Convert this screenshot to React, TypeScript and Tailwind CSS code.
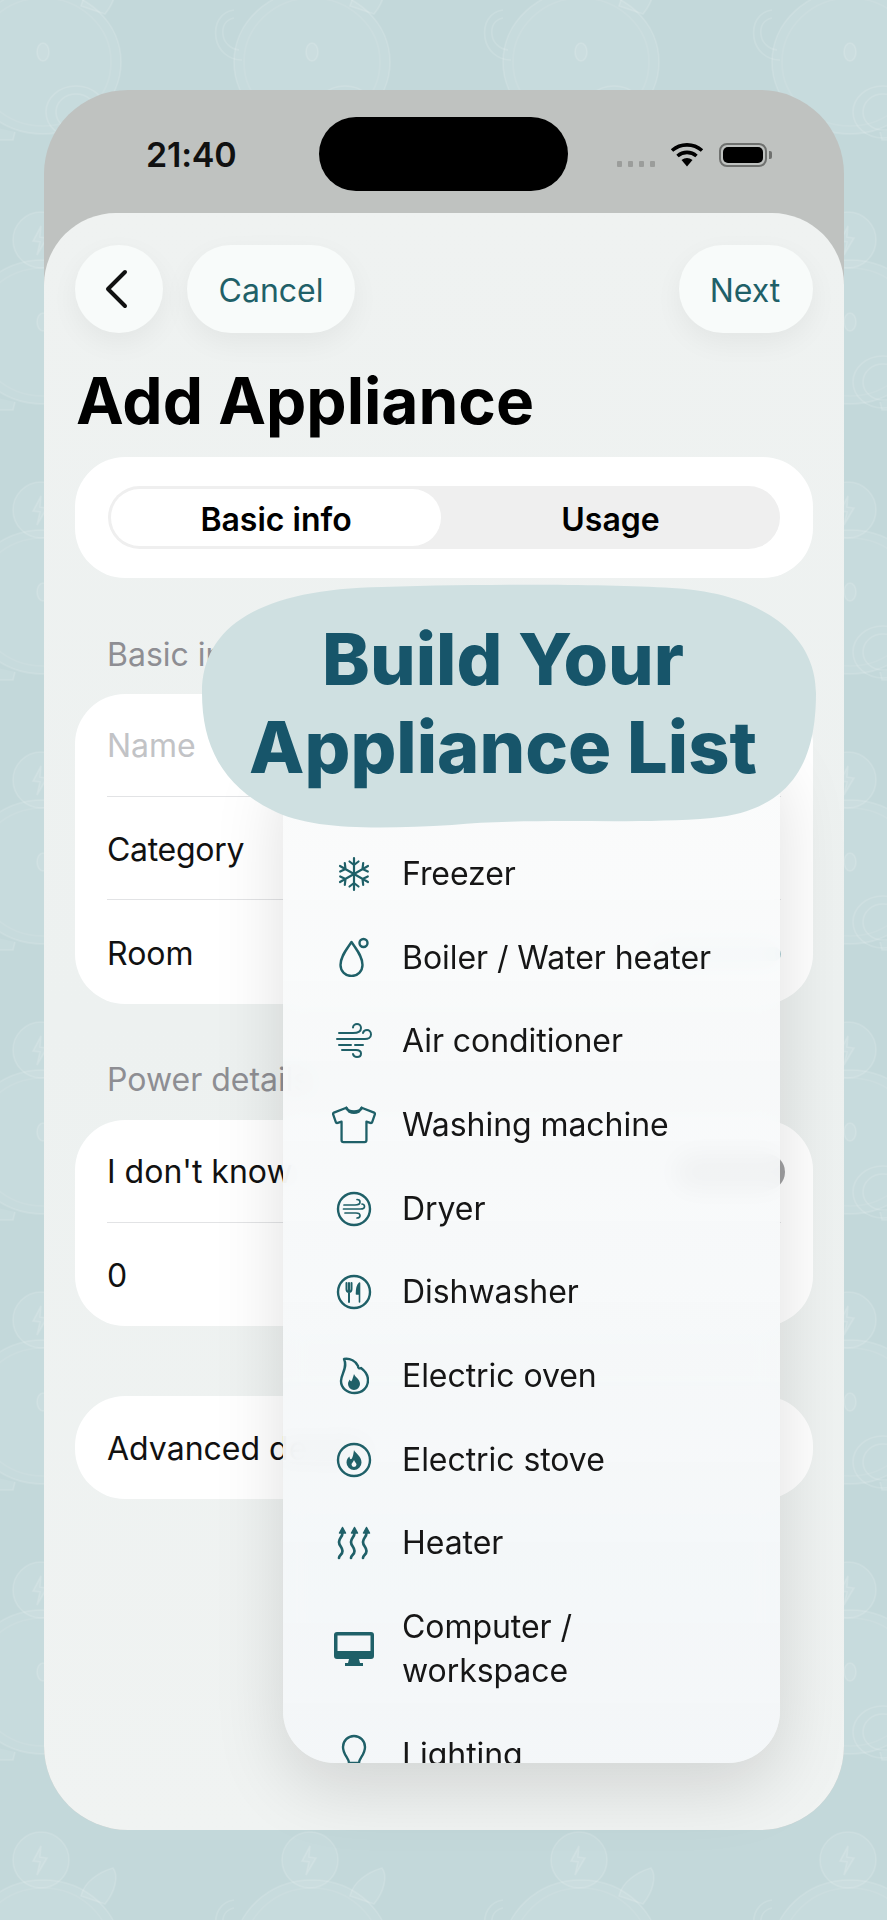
import React from "react";

const teal = "#1f6068";

function PigPattern() {
  return (
    <svg className="absolute inset-0" width="887" height="1920" aria-hidden="true">
      <defs>
        <pattern id="pig" patternUnits="userSpaceOnUse" x="-69" y="-60" width="269" height="270">
          <g fill="#ffffff" fillOpacity="0.07" stroke="#ffffff" strokeOpacity="0.12" strokeWidth="1.6">
            <circle cx="110" cy="30" r="28" />
            <path d="M110 16l-8 15 7 1-3 13 10-17-7-1z" />
            <path d="M150 66c3-14 18-24 32-28 6 8 2 24-8 36z" />
            <ellipse cx="112" cy="122" rx="78" ry="72" />
            <ellipse cx="112" cy="122" rx="68" ry="64" fillOpacity="0" strokeOpacity="0.07" />
            <path d="M58 186l-2 14h26l2-8M142 192l2 8h26l-2-14" />
            <path d="M34 70c-14 2-20 14-18 28 2 12 12 22 26 22" fillOpacity="0" />
            <path d="M34 78c-9 2-12 9-11 17 1 8 8 14 16 15" fillOpacity="0" />
            <ellipse cx="112" cy="112" rx="6" ry="9" />
            <ellipse cx="145" cy="172" rx="30" ry="26" fillOpacity="0" />
            <ellipse cx="145" cy="172" rx="20" ry="18" fillOpacity="0" />
          </g>
        </pattern>
      </defs>
      <rect width="887" height="1920" fill="url(#pig)" />
    </svg>
  );
}

const iconProps = {
  fill: "none",
  stroke: teal,
  strokeWidth: 2.4,
  strokeLinecap: "round" as const,
  strokeLinejoin: "round" as const,
};

function Freezer() {
  return (
    <svg width="36" height="36" viewBox="0 0 36 36" {...iconProps} strokeWidth={2.2}>
      <path d="M18 2v32M13.5 5.5L18 9l4.5-3.5M13.5 30.5L18 27l4.5 3.5" />
      <path d="M4 10l28 16M4.2 15.5L9.5 13 8.8 7.2M31.8 20.5L26.5 23l.7 5.8" />
      <path d="M4 26l28-16M4.2 20.5L9.5 23l-.7 5.8M31.8 15.5L26.5 13l.7-5.8" />
    </svg>
  );
}
function Boiler() {
  return (
    <svg className="-mt-[2px]" width="36" height="40" viewBox="0 0 36 40" {...iconProps}>
      <path d="M15.5 5c4.500 7 11 14 11 23a11 11 0 0 1-22 0c0-9 6.500-16 11-23z" />
      <circle cx="27.500" cy="6" r="4" />
    </svg>
  );
}
function WindLines() {
  return (
    <g>
      <path d="M3 10h14c5 0 8-1.500 8-5 0-2.500-2-4-4-4s-4 1.500-4 3.500" />
      <path d="M1 16h28c3 0 6-1.500 6-4.500s-2-4.500-4-4.500-3.500 1-4 3" />
      <path d="M3 22h12M19 22h8M6 27h14c3 0 5 1 5 3.500S23 34 21 34s-3.500-1-4-3" />
    </g>
  );
}
function Air() {
  return (
    <svg width="36" height="36" viewBox="0 0 36 36" {...iconProps} strokeWidth={2}>
      <WindLines />
    </svg>
  );
}
function Shirt() {
  return (
    <svg width="46" height="40" viewBox="0 0 46 40" {...iconProps}>
      <path d="M15 2c2 5 14 5 16 0l13 5c1 .500 1 1 .800 2l-2.800 8c-.300 1-1 1-2 .800L36 16.500V36a2 2 0 0 1-2 2H12a2 2 0 0 1-2-2V16.500L6 17.800c-1 .200-1.700.200-2-.800L1.200 9c-.200-1-.200-1.500.800-2z" />
      <path d="M15 2c1 2 2 3 3 4 3 1.500 7 1.500 10 0 1-1 2-2 3-4" />
    </svg>
  );
}
function Dryer() {
  return (
    <svg width="36" height="36" viewBox="0 0 36 36" {...iconProps}>
      <circle cx="18" cy="18" r="16" />
      <g strokeWidth={1.700}>
        <path d="M8 14h11c3 0 5-1 5-3s-1.500-2.500-3-2.500M7.500 18h17c2.500 0 4-1 4-2.500S27 13 26 13M9 22h11c2.500 0 4 1 4 2.500S22.500 27 21 27" />
      </g>
    </svg>
  );
}
function Dish() {
  return (
    <svg width="36" height="36" viewBox="0 0 36 36" {...iconProps}>
      <circle cx="18" cy="18" r="16" />
      <path d="M10.500 9v6c0 2 1 3 2.500 3s2.500-1 2.500-3V9M13 9v19" strokeWidth={2} />
      <path d="M23.500 28V9c-2.500 2-3 7-3 11h3z" fill={teal} strokeWidth={1.600} />
    </svg>
  );
}
function Oven() {
  return (
    <svg width="30" height="38" viewBox="0 0 30 38" {...iconProps}>
      <path d="M5 2C11 1 17 4 19 9C19 11 20 12 22 11C26 14 29 18 29 23C29 31 23 36 15.500 36C8 36 2 31 2 24C2 17 9 11 5 2Z" />
      <path d="M15 17c1 3 6 5 6 10a6 6 0 0 1-12 0c0-2 1-3.500 2-4.500 0 1.500 1 2 1.500 1.500 1-1.500 1.500-4 2.500-7z" fill={teal} stroke="none" />
    </svg>
  );
}
function Stove() {
  return (
    <svg width="36" height="36" viewBox="0 0 36 36" {...iconProps}>
      <circle cx="18" cy="18" r="16" />
      <path fillRule="evenodd" d="M18 8c1 3 7.500 6 7.500 12.500a7.500 7.500 0 0 1-15 0c0-3 1.500-5 3-6 0 2 1 3 2 2.500C17 15 17.500 11 18 8zm0 10c-.500 2-2.500 3-2.500 4.500a2.500 2.500 0 0 0 5 0c0-1.500-2-2.500-2.500-4.500z" fill={teal} stroke="none" />
    </svg>
  );
}
function Heater() {
  const w = "c0 4-3.500 5-3.500 9s3.500 5 3.500 9-3.500 4-3.500 7";
  return (
    <svg width="36" height="36" viewBox="0 0 36 36" {...iconProps}>
      <path d={`M6 8${w}M18 8${w}M30 8${w}`} transform="translate(.5 0)" strokeWidth={2.700} />
      <path d="M3.500 8L6.500 2.500 9.500 8zM15.500 8L18.500 2.500 21.500 8zM27.500 8L30.500 2.500 33.500 8z" fill={teal} strokeWidth={1.500} />
    </svg>
  );
}
function Computer() {
  return (
    <svg width="42" height="36" viewBox="0 0 42 36" aria-hidden="true">
      <path fillRule="evenodd" fill={teal} d="M4 1h34a3 3 0 0 1 3 3v21a3 3 0 0 1-3 3H4a3 3 0 0 1-3-3V4a3 3 0 0 1 3-3zm.500 3.500v15.500h33V4.500z" />
      <path fill={teal} d="M16 28h10l1 4h3v3H12v-3h3z" />
    </svg>
  );
}
function Bulb() {
  return (
    <svg className="-mt-[4px]" width="26" height="40" viewBox="0 0 26 40" {...iconProps}>
      <path d="M8 30c0-5-6-8-6-16a11 11 0 0 1 22 0c0 8-6 11-6 16z" />
    </svg>
  );
}

const items: { label: React.ReactNode; icon: React.ReactNode }[] = [
  { label: "Freezer", icon: <Freezer /> },
  { label: "Boiler / Water heater", icon: <Boiler /> },
  { label: "Air conditioner", icon: <Air /> },
  { label: "Washing machine", icon: <Shirt /> },
  { label: "Dryer", icon: <Dryer /> },
  { label: "Dishwasher", icon: <Dish /> },
  { label: "Electric oven", icon: <Oven /> },
  { label: "Electric stove", icon: <Stove /> },
  { label: "Heater", icon: <Heater /> },
  { label: <>Computer /<br />workspace</>, icon: <Computer /> },
  { label: "Lighting", icon: <Bulb /> },
];

export default function App() {
  return (
    <div
      className="relative w-[887px] h-[1920px] overflow-hidden bg-[#c3d8da] pt-[90px] pl-[44px] text-[32px] leading-[44px] text-[#111111]"
      style={{ fontFamily: "Inter, 'Noto Sans', sans-serif" }}
    >
      <PigPattern />

      {/* Phone */}
      <div className="relative w-[800px] h-[1740px] rounded-[84px] overflow-hidden bg-[#bfc2c0] flex flex-col">
        {/* Status bar */}
        <div className="h-[123px] shrink-0 flex items-center pt-[7px] pl-[102px]">
          <div className="w-[173px] text-[34px] font-semibold text-[#111] tracking-[-0.2px]">21:40</div>
          <div className="w-[249px] h-[74px] -mt-[2px] rounded-[37px] bg-black shrink-0" />
          <div className="ml-[49px] mt-[18px] flex gap-[6px]">
            <span className="w-[5px] h-[6px] rounded-[1px] bg-[#9b9d9b]" />
            <span className="w-[5px] h-[6px] rounded-[1px] bg-[#9b9d9b]" />
            <span className="w-[5px] h-[6px] rounded-[1px] bg-[#9b9d9b]" />
            <span className="w-[5px] h-[6px] rounded-[1px] bg-[#9b9d9b]" />
          </div>
          <svg className="ml-[15px] -mt-[1px]" width="34" height="25" viewBox="0 0 34 25" aria-hidden="true">
            <g fill="none" stroke="#000" strokeWidth="3.600">
              <path d="M2 8.500C10.500 1 23.500 1 32 8.500" />
              <path d="M7.500 14c5.500-4.800 13.500-4.800 19 0" />
            </g>
            <path d="M11.500 18c3.500-2.800 7.500-2.800 11 0L17 24.500z" fill="#000" />
          </svg>
          <div className="ml-[15px] -mt-[1px] flex items-center">
            <div className="w-[48px] h-[24px] rounded-[8px] border-[2px] border-[#6f716f] p-[2px]">
              <div className="w-full h-full rounded-[5px] bg-black" />
            </div>
            <div className="ml-[2px] w-[3px] h-[8px] rounded-r-[2px] bg-[#6f716f]" />
          </div>
        </div>

        {/* Sheet */}
        <div className="flex-1 rounded-t-[72px] bg-gradient-to-b from-[#eff2f1] via-[#edf1f0] to-[#f0f3f2] px-[31px] pt-[32px]">
          <div className="flex items-center">
            <div className="w-[88px] h-[88px] rounded-full bg-[#f8fbfa] flex items-center justify-center shadow-[0_10px_28px_rgba(0,0,0,0.05)]">
              <svg className="-ml-[6px]" width="26" height="40" viewBox="0 0 26 40" fill="none" stroke="#111" strokeWidth="4" strokeLinecap="round" strokeLinejoin="round" aria-hidden="true">
                <path d="M22 3L5 20l17 17" />
              </svg>
            </div>
            <div className="ml-[24px] w-[168px] h-[88px] pt-[4px] rounded-[44px] bg-[#f8fbfa] flex items-center justify-center text-[#1f6068] shadow-[0_10px_28px_rgba(0,0,0,0.05)]">Cancel</div>
            <div className="ml-auto w-[134px] h-[88px] pt-[4px] pr-[2px] rounded-[44px] bg-[#f8fbfa] flex items-center justify-center text-[#1f6068] shadow-[0_10px_28px_rgba(0,0,0,0.05)]">Next</div>
          </div>

          <h1 className="mt-[32px] h-[92px] pl-[1px] text-[64px] leading-[72px] font-bold text-black">Add Appliance</h1>

          <div className="h-[121px] rounded-[50px] bg-white px-[33px] flex items-center">
            <div className="w-full h-[63px] rounded-full bg-[#efefef] p-[3px] flex items-center font-semibold text-black">
              <div className="w-[330px] h-full pt-[4px] rounded-full bg-white flex items-center justify-center">Basic info</div>
              <div className="flex-1 pt-[4px] pl-[3px] flex items-center justify-center">Usage</div>
            </div>
          </div>

          <div className="mt-[57px] mb-[19px] pl-[32px] leading-[40px] text-[#8e8e93]">Basic info</div>
          <div className="rounded-[50px] bg-white px-[32px]">
            <div className="h-[103px] pt-[2px] border-b border-[#e2e3e5] flex items-center text-[#c2c3c6]">Name</div>
            <div className="h-[103px] pt-[3px] border-b border-[#e2e3e5] flex items-center tracking-[-0.3px]">Category</div>
            <div className="h-[104px] pt-[3px] flex items-center justify-between">
              <span>Room</span>
              <span className="w-[130px] h-[14px] bg-[#a9ccd2] rounded-full" />
            </div>
          </div>

          <div className="mt-[56px] mb-[20px] pl-[32px] leading-[40px] text-[#8e8e93]">Power details</div>
          <div className="rounded-[50px] bg-white px-[32px]">
            <div className="h-[103px] pt-[2px] border-b border-[#e2e3e5] flex items-center justify-between">
              <span>I don't know</span>
              <span className="w-[110px] h-[36px] rounded-full bg-[#a0a0a2] -mr-[4px]" />
            </div>
            <div className="h-[103px] pt-[2px] flex items-center">0</div>
          </div>

          <div className="mt-[70px] h-[103px] pt-[2px] rounded-[50px] bg-white px-[32px] flex items-center">Advanced details</div>
        </div>
      </div>

      {/* Dropdown menu */}
      <div className="absolute left-[283px] top-[740px] w-[497px] h-[1023px] rounded-[52px] overflow-hidden bg-gradient-to-b from-[#fafbfb]/90 to-[#f3f6f8]/95 backdrop-blur-md shadow-[0_24px_70px_rgba(0,0,0,0.13)] pt-[92px]">
        {items.map((item, i) => (
          <div key={i} className="flex items-center pl-[49px] py-[19.85px]">
            <div className="w-[44px] flex items-center justify-center shrink-0">{item.icon}</div>
            <div className="ml-[26px] text-[#161616] tracking-[-0.06px]">{item.label}</div>
          </div>
        ))}
      </div>

      {/* Headline bubble */}
      <div className="absolute left-[202px] top-[585px] w-[614px] h-[241px] flex items-center justify-center text-center pr-[12px] pb-[6px] text-[72px] leading-[88px] font-extrabold text-[#17556a]">
        <svg className="absolute left-0 top-0 overflow-visible" width="614" height="241" viewBox="0 0 614 241" aria-hidden="true">
          <path fill="#cfe0e1" d="M0 108C0 40 60 4 180 2C280 -1 400 -1 470 3C560 8 614 50 614 108C614 170 595 225 510 233C430 240 340 232 250 240C180 244 110 246 70 225C20 200 0 160 0 108Z" />
        </svg>
        <span className="relative">
          Build Your
          <br />
          Appliance List
        </span>
      </div>
    </div>
  );
}
